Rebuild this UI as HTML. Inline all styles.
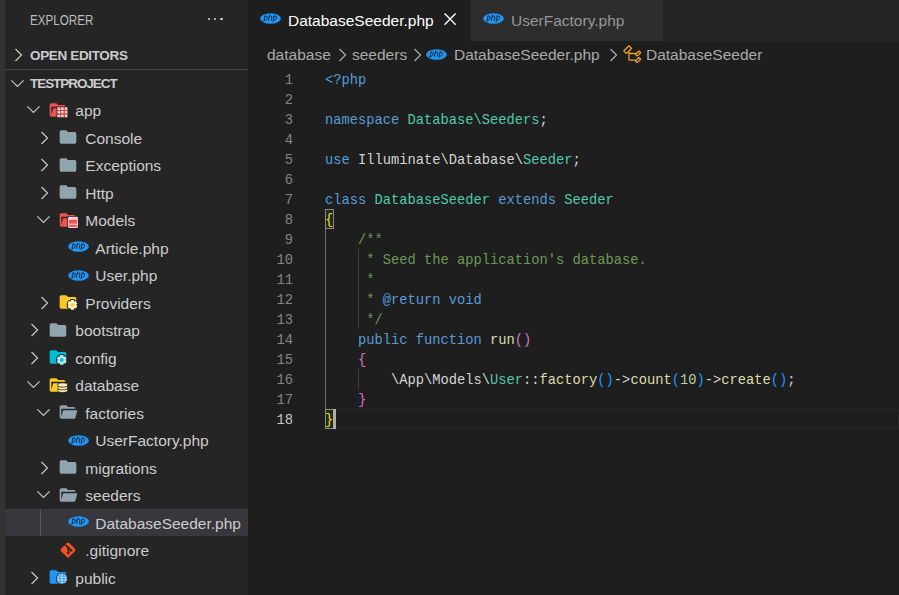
<!DOCTYPE html>
<html><head><meta charset="utf-8"><style>
*{margin:0;padding:0;box-sizing:border-box}
html,body{width:899px;height:595px;overflow:hidden;background:#1e1e1e}
body{position:relative;font-family:"Liberation Sans",sans-serif}
.ic{position:absolute;display:block}
#act{position:absolute;left:0;top:0;width:5px;height:595px;background:#333333}
#side{position:absolute;left:5px;top:0;width:243px;height:595px;background:#252526}
.abs{position:absolute}
.tl{position:absolute;height:27.5px;line-height:27.5px;font-size:15.5px;color:#cccccc;white-space:nowrap;padding-top:0.7px}
.sel{position:absolute;left:5px;width:243px;background:#37373d}
.cl{position:absolute;left:325px;height:20px;line-height:20px;font-family:"Liberation Mono",monospace;font-size:13.75px;color:#d4d4d4;white-space:pre;padding-top:1.8px}
.ln{position:absolute;left:260px;width:33px;text-align:right;height:20px;line-height:20px;font-family:"Liberation Mono",monospace;font-size:13.75px;padding-top:2px}
</style></head><body>
<div id="act"></div>
<div id="side"></div>
<div class="abs" style="left:30px;top:0;height:41px;line-height:41px;font-size:13.75px;color:#bbbbbb;transform:scaleX(0.845);transform-origin:0 0;margin-top:-0.5px">EXPLORER</div>
<div class="abs" style="left:207.6px;top:17.5px;width:2.6px;height:2.6px;border-radius:50%;background:#d8d8d8"></div>
<div class="abs" style="left:213.9px;top:17.5px;width:2.6px;height:2.6px;border-radius:50%;background:#d8d8d8"></div>
<div class="abs" style="left:220.2px;top:17.5px;width:2.6px;height:2.6px;border-radius:50%;background:#d8d8d8"></div>
<svg class="ic" style="left:13.7px;top:48px" width="9" height="14" viewBox="0 0 9 14"><path d="M1.5 1 L7.5 7 L1.5 13" fill="none" stroke="#c5c5c5" stroke-width="1.25"/></svg>
<div class="abs" style="left:30px;top:41.5px;height:27.5px;line-height:27.5px;font-size:13.5px;font-weight:bold;color:#cccccc;letter-spacing:-0.35px">OPEN EDITORS</div>
<div class="abs" style="left:5px;top:69px;width:243px;height:1px;background:#434344"></div>
<svg class="ic" style="left:9.600000000000001px;top:78.89999999999999px" width="15" height="9" viewBox="0 0 15 9"><path d="M1.4 1.4 L7.5 7.5 L13.6 1.4" fill="none" stroke="#c5c5c5" stroke-width="1.2"/></svg>
<div class="abs" style="left:30px;top:70px;height:27.5px;line-height:27.5px;font-size:13.5px;font-weight:bold;color:#cccccc;letter-spacing:-1.05px">TESTPROJECT</div>
<svg class="ic" style="left:25.5px;top:105.05px" width="15" height="9" viewBox="0 0 15 9"><path d="M1.4 1.4 L7.5 7.5 L13.6 1.4" fill="none" stroke="#c5c5c5" stroke-width="1.2"/></svg>
<svg class="ic" style="left:48.333px;top:100.25px" width="20" height="20" viewBox="0 0 24 24"><path d="M19 20H4a2 2 0 0 1-2-2V6c0-1.11.89-2 2-2h6l2 2h7a2 2 0 0 1 2 2H4v10l2.14-8h17.07l-2.28 8.5c-.23.87-1.01 1.5-1.93 1.5z" fill="#ef5350"/><rect x="10.3" y="7.9" width="13.9" height="13.9" fill="#252526"/><rect x="11.3" y="8.7" width="3.4" height="3.4" fill="#ffcdd2"/><rect x="11.3" y="13.0" width="3.4" height="3.4" fill="#ffcdd2"/><rect x="11.3" y="17.299999999999997" width="3.4" height="3.4" fill="#ffcdd2"/><rect x="15.600000000000001" y="8.7" width="3.4" height="3.4" fill="#ffcdd2"/><rect x="15.600000000000001" y="13.0" width="3.4" height="3.4" fill="#ffcdd2"/><rect x="15.600000000000001" y="17.299999999999997" width="3.4" height="3.4" fill="#ffcdd2"/><rect x="19.9" y="8.7" width="3.4" height="3.4" fill="#ffcdd2"/><rect x="19.9" y="13.0" width="3.4" height="3.4" fill="#ffcdd2"/><rect x="19.9" y="17.299999999999997" width="3.4" height="3.4" fill="#ffcdd2"/><rect x="14.7" y="8.7" width="0.9" height="12.3" fill="#ef5350"/><rect x="19" y="8.7" width="0.9" height="12.3" fill="#ef5350"/><rect x="11.3" y="12.1" width="12.3" height="0.9" fill="#ef5350"/><rect x="11.3" y="16.4" width="12.3" height="0.9" fill="#ef5350"/></svg>
<div class="tl" style="left:75.3px;top:96.5px">app</div>
<svg class="ic" style="left:39.5px;top:130.75px" width="9" height="14" viewBox="0 0 9 14"><path d="M1.5 1 L7.5 7 L1.5 13" fill="none" stroke="#c5c5c5" stroke-width="1.25"/></svg>
<svg class="ic" style="left:58.333px;top:126.85px" width="20" height="20" viewBox="0 0 24 24"><path d="M10 4H4c-1.11 0-2 .89-2 2v12a2 2 0 0 0 2 2h16a2 2 0 0 0 2-2V8a2 2 0 0 0-2-2h-8l-2-2z" fill="#90a4ae"/></svg>
<div class="tl" style="left:85.3px;top:124.0px">Console</div>
<svg class="ic" style="left:39.5px;top:158.25px" width="9" height="14" viewBox="0 0 9 14"><path d="M1.5 1 L7.5 7 L1.5 13" fill="none" stroke="#c5c5c5" stroke-width="1.25"/></svg>
<svg class="ic" style="left:58.333px;top:155.25px" width="20" height="20" viewBox="0 0 24 24"><path d="M10 4H4c-1.11 0-2 .89-2 2v12a2 2 0 0 0 2 2h16a2 2 0 0 0 2-2V8a2 2 0 0 0-2-2h-8l-2-2z" fill="#90a4ae"/></svg>
<div class="tl" style="left:85.3px;top:151.5px">Exceptions</div>
<svg class="ic" style="left:39.5px;top:185.75px" width="9" height="14" viewBox="0 0 9 14"><path d="M1.5 1 L7.5 7 L1.5 13" fill="none" stroke="#c5c5c5" stroke-width="1.25"/></svg>
<svg class="ic" style="left:58.333px;top:181.85px" width="20" height="20" viewBox="0 0 24 24"><path d="M10 4H4c-1.11 0-2 .89-2 2v12a2 2 0 0 0 2 2h16a2 2 0 0 0 2-2V8a2 2 0 0 0-2-2h-8l-2-2z" fill="#90a4ae"/></svg>
<div class="tl" style="left:85.3px;top:179.0px">Http</div>
<svg class="ic" style="left:35.5px;top:215.05px" width="15" height="9" viewBox="0 0 15 9"><path d="M1.4 1.4 L7.5 7.5 L13.6 1.4" fill="none" stroke="#c5c5c5" stroke-width="1.2"/></svg>
<svg class="ic" style="left:58.333px;top:210.25px" width="20" height="20" viewBox="0 0 24 24"><path d="M19 20H4a2 2 0 0 1-2-2V6c0-1.11.89-2 2-2h6l2 2h7a2 2 0 0 1 2 2H4v10l2.14-8h17.07l-2.28 8.5c-.23.87-1.01 1.5-1.93 1.5z" fill="#ef5350"/><rect x="11.2" y="7.1" width="13.6" height="15.3" rx="1.6" fill="#252526"/><rect x="12.1" y="8" width="11.8" height="13.5" rx="1.3" fill="#ffcdd2"/><rect x="13.3" y="11.8" width="9.4" height="4.6" fill="#ef5350"/><rect x="13.3" y="17.8" width="9.4" height="2.4" fill="#ef5350"/></svg>
<div class="tl" style="left:85.3px;top:206.5px">Models</div>
<svg class="ic" style="left:67.5px;top:241.35px" width="21" height="11" viewBox="0 0 21 11"><ellipse cx="10.5" cy="5.5" rx="10.3" ry="5.2" fill="#2196f3"/><g fill="none" stroke="#0e2238" stroke-width="0.9" stroke-linecap="round"><path d="M5.0 3.0 L3.8 8.6 M4.8 3.3 C6.6 2.6 7.6 3.2 7.2 4.9 C6.9 6.6 5.6 7.6 4.3 7.2"/><path d="M9.6 1.9 L8.4 7.4 M9.1 4.0 C10.1 2.9 12.1 2.7 11.9 4.2 L11.3 7.4"/><path d="M14.2 3.0 L13.0 8.6 M14.0 3.3 C15.8 2.6 16.9 3.2 16.5 4.9 C16.2 6.6 14.8 7.6 13.5 7.2"/></g></svg>
<div class="tl" style="left:95.3px;top:234.0px">Article.php</div>
<svg class="ic" style="left:67.5px;top:269.75px" width="21" height="11" viewBox="0 0 21 11"><ellipse cx="10.5" cy="5.5" rx="10.3" ry="5.2" fill="#2196f3"/><g fill="none" stroke="#0e2238" stroke-width="0.9" stroke-linecap="round"><path d="M5.0 3.0 L3.8 8.6 M4.8 3.3 C6.6 2.6 7.6 3.2 7.2 4.9 C6.9 6.6 5.6 7.6 4.3 7.2"/><path d="M9.6 1.9 L8.4 7.4 M9.1 4.0 C10.1 2.9 12.1 2.7 11.9 4.2 L11.3 7.4"/><path d="M14.2 3.0 L13.0 8.6 M14.0 3.3 C15.8 2.6 16.9 3.2 16.5 4.9 C16.2 6.6 14.8 7.6 13.5 7.2"/></g></svg>
<div class="tl" style="left:95.3px;top:261.5px">User.php</div>
<svg class="ic" style="left:39.5px;top:295.75px" width="9" height="14" viewBox="0 0 9 14"><path d="M1.5 1 L7.5 7 L1.5 13" fill="none" stroke="#c5c5c5" stroke-width="1.25"/></svg>
<svg class="ic" style="left:58.333px;top:291.85px" width="20" height="20" viewBox="0 0 24 24"><path d="M10 4H4c-1.11 0-2 .89-2 2v12a2 2 0 0 0 2 2h16a2 2 0 0 0 2-2V8a2 2 0 0 0-2-2h-8l-2-2z" fill="#ffca28"/><polygon points="15.07,11.58 15.44,9.58 19.06,9.58 19.43,11.58 19.47,11.60 21.39,10.92 23.20,14.06 21.65,15.38 21.65,15.42 23.20,16.74 21.39,19.88 19.47,19.20 19.43,19.22 19.06,21.22 15.44,21.22 15.07,19.22 15.03,19.20 13.11,19.88 11.30,16.74 12.85,15.42 12.85,15.38 11.30,14.06 13.11,10.92 15.03,11.60" fill="#252526" stroke="#252526" stroke-width="2.2" stroke-linejoin="round"/><polygon points="15.07,11.58 15.44,9.58 19.06,9.58 19.43,11.58 19.47,11.60 21.39,10.92 23.20,14.06 21.65,15.38 21.65,15.42 23.20,16.74 21.39,19.88 19.47,19.20 19.43,19.22 19.06,21.22 15.44,21.22 15.07,19.22 15.03,19.20 13.11,19.88 11.30,16.74 12.85,15.42 12.85,15.38 11.30,14.06 13.11,10.92 15.03,11.60" fill="#fff9c4"/><circle cx="17.25" cy="15.4" r="4.4" fill="#fff9c4"/><circle cx="17.25" cy="15.4" r="2.2" fill="#ffca28"/></svg>
<div class="tl" style="left:85.3px;top:289.0px">Providers</div>
<svg class="ic" style="left:29.5px;top:323.25px" width="9" height="14" viewBox="0 0 9 14"><path d="M1.5 1 L7.5 7 L1.5 13" fill="none" stroke="#c5c5c5" stroke-width="1.25"/></svg>
<svg class="ic" style="left:48.333px;top:320.25px" width="20" height="20" viewBox="0 0 24 24"><path d="M10 4H4c-1.11 0-2 .89-2 2v12a2 2 0 0 0 2 2h16a2 2 0 0 0 2-2V8a2 2 0 0 0-2-2h-8l-2-2z" fill="#90a4ae"/></svg>
<div class="tl" style="left:75.3px;top:316.5px">bootstrap</div>
<svg class="ic" style="left:29.5px;top:350.75px" width="9" height="14" viewBox="0 0 9 14"><path d="M1.5 1 L7.5 7 L1.5 13" fill="none" stroke="#c5c5c5" stroke-width="1.25"/></svg>
<svg class="ic" style="left:48.333px;top:346.85px" width="20" height="20" viewBox="0 0 24 24"><path d="M10 4H4c-1.11 0-2 .89-2 2v12a2 2 0 0 0 2 2h16a2 2 0 0 0 2-2V8a2 2 0 0 0-2-2h-8l-2-2z" fill="#00bcd4"/><polygon points="14.32,11.68 14.69,9.68 18.31,9.68 18.68,11.68 18.72,11.70 20.64,11.02 22.45,14.16 20.90,15.48 20.90,15.52 22.45,16.84 20.64,19.98 18.72,19.30 18.68,19.32 18.31,21.32 14.69,21.32 14.32,19.32 14.28,19.30 12.36,19.98 10.55,16.84 12.10,15.52 12.10,15.48 10.55,14.16 12.36,11.02 14.28,11.70" fill="#252526" stroke="#252526" stroke-width="2.2" stroke-linejoin="round"/><polygon points="14.32,11.68 14.69,9.68 18.31,9.68 18.68,11.68 18.72,11.70 20.64,11.02 22.45,14.16 20.90,15.48 20.90,15.52 22.45,16.84 20.64,19.98 18.72,19.30 18.68,19.32 18.31,21.32 14.69,21.32 14.32,19.32 14.28,19.30 12.36,19.98 10.55,16.84 12.10,15.52 12.10,15.48 10.55,14.16 12.36,11.02 14.28,11.70" fill="#b2ebf2"/><circle cx="16.5" cy="15.5" r="4.4" fill="#b2ebf2"/><circle cx="16.5" cy="15.5" r="2.2" fill="#00bcd4"/></svg>
<div class="tl" style="left:75.3px;top:344.0px">config</div>
<svg class="ic" style="left:25.5px;top:380.05px" width="15" height="9" viewBox="0 0 15 9"><path d="M1.4 1.4 L7.5 7.5 L13.6 1.4" fill="none" stroke="#c5c5c5" stroke-width="1.2"/></svg>
<svg class="ic" style="left:48.333px;top:375.25px" width="20" height="20" viewBox="0 0 24 24"><path d="M19 20H4a2 2 0 0 1-2-2V6c0-1.11.89-2 2-2h6l2 2h7a2 2 0 0 1 2 2H4v10l2.14-8h17.07l-2.28 8.5c-.23.87-1.01 1.5-1.93 1.5z" fill="#ffca28"/><g fill="#ffecb3" stroke="#252526" stroke-width="1"><ellipse cx="17.6" cy="18.4" rx="6" ry="2.6"/><ellipse cx="17.6" cy="15.2" rx="6" ry="2.6"/><ellipse cx="17.6" cy="12" rx="6" ry="2.6"/></g></svg>
<div class="tl" style="left:75.3px;top:371.5px">database</div>
<svg class="ic" style="left:35.5px;top:407.55px" width="15" height="9" viewBox="0 0 15 9"><path d="M1.4 1.4 L7.5 7.5 L13.6 1.4" fill="none" stroke="#c5c5c5" stroke-width="1.2"/></svg>
<svg class="ic" style="left:58.333px;top:401.85px" width="20" height="20" viewBox="0 0 24 24"><path d="M19 20H4a2 2 0 0 1-2-2V6c0-1.11.89-2 2-2h6l2 2h7a2 2 0 0 1 2 2H4v10l2.14-8h17.07l-2.28 8.5c-.23.87-1.01 1.5-1.93 1.5z" fill="#90a4ae"/></svg>
<div class="tl" style="left:85.3px;top:399.0px">factories</div>
<svg class="ic" style="left:67.5px;top:434.75px" width="21" height="11" viewBox="0 0 21 11"><ellipse cx="10.5" cy="5.5" rx="10.3" ry="5.2" fill="#2196f3"/><g fill="none" stroke="#0e2238" stroke-width="0.9" stroke-linecap="round"><path d="M5.0 3.0 L3.8 8.6 M4.8 3.3 C6.6 2.6 7.6 3.2 7.2 4.9 C6.9 6.6 5.6 7.6 4.3 7.2"/><path d="M9.6 1.9 L8.4 7.4 M9.1 4.0 C10.1 2.9 12.1 2.7 11.9 4.2 L11.3 7.4"/><path d="M14.2 3.0 L13.0 8.6 M14.0 3.3 C15.8 2.6 16.9 3.2 16.5 4.9 C16.2 6.6 14.8 7.6 13.5 7.2"/></g></svg>
<div class="tl" style="left:95.3px;top:426.5px">UserFactory.php</div>
<svg class="ic" style="left:39.5px;top:460.75px" width="9" height="14" viewBox="0 0 9 14"><path d="M1.5 1 L7.5 7 L1.5 13" fill="none" stroke="#c5c5c5" stroke-width="1.25"/></svg>
<svg class="ic" style="left:58.333px;top:456.85px" width="20" height="20" viewBox="0 0 24 24"><path d="M10 4H4c-1.11 0-2 .89-2 2v12a2 2 0 0 0 2 2h16a2 2 0 0 0 2-2V8a2 2 0 0 0-2-2h-8l-2-2z" fill="#90a4ae"/></svg>
<div class="tl" style="left:85.3px;top:454.0px">migrations</div>
<svg class="ic" style="left:35.5px;top:490.05px" width="15" height="9" viewBox="0 0 15 9"><path d="M1.4 1.4 L7.5 7.5 L13.6 1.4" fill="none" stroke="#c5c5c5" stroke-width="1.2"/></svg>
<svg class="ic" style="left:58.333px;top:485.25px" width="20" height="20" viewBox="0 0 24 24"><path d="M19 20H4a2 2 0 0 1-2-2V6c0-1.11.89-2 2-2h6l2 2h7a2 2 0 0 1 2 2H4v10l2.14-8h17.07l-2.28 8.5c-.23.87-1.01 1.5-1.93 1.5z" fill="#90a4ae"/></svg>
<div class="tl" style="left:85.3px;top:481.5px">seeders</div>
<div class="sel" style="top:509px;height:27px"></div>
<div style="position:absolute;left:40px;top:509px;width:1px;height:27px;background:#585858"></div>
<svg class="ic" style="left:67.5px;top:516.35px" width="21" height="11" viewBox="0 0 21 11"><ellipse cx="10.5" cy="5.5" rx="10.3" ry="5.2" fill="#2196f3"/><g fill="none" stroke="#0e2238" stroke-width="0.9" stroke-linecap="round"><path d="M5.0 3.0 L3.8 8.6 M4.8 3.3 C6.6 2.6 7.6 3.2 7.2 4.9 C6.9 6.6 5.6 7.6 4.3 7.2"/><path d="M9.6 1.9 L8.4 7.4 M9.1 4.0 C10.1 2.9 12.1 2.7 11.9 4.2 L11.3 7.4"/><path d="M14.2 3.0 L13.0 8.6 M14.0 3.3 C15.8 2.6 16.9 3.2 16.5 4.9 C16.2 6.6 14.8 7.6 13.5 7.2"/></g></svg>
<div class="tl" style="left:95.3px;top:509.0px">DatabaseSeeder.php</div>
<svg class="ic" style="left:59px;top:541.25px" width="18" height="18" viewBox="0 0 18 18"><rect x="3.3" y="3.3" width="11.4" height="11.4" rx="1.6" transform="rotate(45 9 9)" fill="#f4511e"/><g stroke="#252526" stroke-width="1.5" fill="none"><path d="M6.2 3.6 L9.3 6.7 L9.3 12"/><path d="M9.3 6.7 L12 9.4"/></g><circle cx="9.3" cy="6.7" r="1.3" fill="#252526"/><circle cx="9.3" cy="12" r="1.3" fill="#252526"/><circle cx="12" cy="9.4" r="1.3" fill="#252526"/></svg>
<div class="tl" style="left:85.3px;top:536.5px">.gitignore</div>
<svg class="ic" style="left:29.5px;top:570.75px" width="9" height="14" viewBox="0 0 9 14"><path d="M1.5 1 L7.5 7 L1.5 13" fill="none" stroke="#c5c5c5" stroke-width="1.25"/></svg>
<svg class="ic" style="left:48.333px;top:566.85px" width="20" height="20" viewBox="0 0 24 24"><path d="M10 4H4c-1.11 0-2 .89-2 2v12a2 2 0 0 0 2 2h16a2 2 0 0 0 2-2V8a2 2 0 0 0-2-2h-8l-2-2z" fill="#2196f3"/><circle cx="16.65" cy="14" r="7.2" fill="#252526"/><circle cx="16.65" cy="14" r="6.1" fill="#bbdefb"/><g stroke="#2196f3" stroke-width="1" fill="none"><ellipse cx="16.65" cy="14" rx="2.5" ry="6.1"/><line x1="10.5" y1="14" x2="22.8" y2="14"/><line x1="11.3" y1="10.9" x2="22" y2="10.9"/><line x1="11.3" y1="17.1" x2="22" y2="17.1"/></g></svg>
<div class="tl" style="left:75.3px;top:564.0px">public</div>
<!-- tabs -->
<div class="abs" style="left:248px;top:0;width:651px;height:41px;background:#252526"></div>
<div class="abs" style="left:248px;top:0;width:222px;height:41px;background:#1e1e1e"></div>
<div class="abs" style="left:471px;top:0;width:192px;height:41px;background:#2d2d2d"></div>
<svg class="ic" style="left:259.7px;top:13.350000000000001px" width="21" height="11" viewBox="0 0 21 11"><ellipse cx="10.5" cy="5.5" rx="10.3" ry="5.2" fill="#2196f3"/><g fill="none" stroke="#0e2238" stroke-width="0.9" stroke-linecap="round"><path d="M5.0 3.0 L3.8 8.6 M4.8 3.3 C6.6 2.6 7.6 3.2 7.2 4.9 C6.9 6.6 5.6 7.6 4.3 7.2"/><path d="M9.6 1.9 L8.4 7.4 M9.1 4.0 C10.1 2.9 12.1 2.7 11.9 4.2 L11.3 7.4"/><path d="M14.2 3.0 L13.0 8.6 M14.0 3.3 C15.8 2.6 16.9 3.2 16.5 4.9 C16.2 6.6 14.8 7.6 13.5 7.2"/></g></svg>
<div class="abs" style="left:288px;top:0;height:41px;line-height:41px;font-size:15.5px;color:#ffffff">DatabaseSeeder.php</div>
<svg class="ic" style="left:439.1px;top:8px" width="22.2" height="22.2" viewBox="0 0 16 16"><path d="M8 8.707l3.646 3.647.708-.707L8.707 8l3.647-3.646-.707-.708L8 7.293 4.354 3.646l-.707.708L7.293 8l-3.646 3.646.707.708L8 8.707z" fill="#ffffff"/></svg>
<svg class="ic" style="left:483.4px;top:13.350000000000001px" width="21" height="11" viewBox="0 0 21 11"><ellipse cx="10.5" cy="5.5" rx="10.3" ry="5.2" fill="#2196f3"/><g fill="none" stroke="#0e2238" stroke-width="0.9" stroke-linecap="round"><path d="M5.0 3.0 L3.8 8.6 M4.8 3.3 C6.6 2.6 7.6 3.2 7.2 4.9 C6.9 6.6 5.6 7.6 4.3 7.2"/><path d="M9.6 1.9 L8.4 7.4 M9.1 4.0 C10.1 2.9 12.1 2.7 11.9 4.2 L11.3 7.4"/><path d="M14.2 3.0 L13.0 8.6 M14.0 3.3 C15.8 2.6 16.9 3.2 16.5 4.9 C16.2 6.6 14.8 7.6 13.5 7.2"/></g></svg>
<div class="abs" style="left:511px;top:0;height:41px;line-height:41px;font-size:15.5px;color:#969696">UserFactory.php</div>
<!-- breadcrumbs -->
<div class="abs" style="left:267px;top:41px;height:28px;line-height:28px;font-size:15.5px;color:#a9a9a9;white-space:nowrap">database</div>
<svg class="ic" style="left:338.2px;top:48px" width="9" height="14" viewBox="0 0 9 14"><path d="M1.5 1 L7.5 7 L1.5 13" fill="none" stroke="#a9a9a9" stroke-width="1.25"/></svg>
<div class="abs" style="left:352px;top:41px;height:28px;line-height:28px;font-size:15.5px;color:#a9a9a9;white-space:nowrap">seeders</div>
<svg class="ic" style="left:412.5px;top:48px" width="9" height="14" viewBox="0 0 9 14"><path d="M1.5 1 L7.5 7 L1.5 13" fill="none" stroke="#a9a9a9" stroke-width="1.25"/></svg>
<svg class="ic" style="left:426.1px;top:49.1px" width="21" height="11" viewBox="0 0 21 11"><ellipse cx="10.5" cy="5.5" rx="10.3" ry="5.2" fill="#2196f3"/><g fill="none" stroke="#0e2238" stroke-width="0.9" stroke-linecap="round"><path d="M5.0 3.0 L3.8 8.6 M4.8 3.3 C6.6 2.6 7.6 3.2 7.2 4.9 C6.9 6.6 5.6 7.6 4.3 7.2"/><path d="M9.6 1.9 L8.4 7.4 M9.1 4.0 C10.1 2.9 12.1 2.7 11.9 4.2 L11.3 7.4"/><path d="M14.2 3.0 L13.0 8.6 M14.0 3.3 C15.8 2.6 16.9 3.2 16.5 4.9 C16.2 6.6 14.8 7.6 13.5 7.2"/></g></svg>
<div class="abs" style="left:454px;top:41px;height:28px;line-height:28px;font-size:15.5px;color:#a9a9a9;white-space:nowrap">DatabaseSeeder.php</div>
<svg class="ic" style="left:609.2px;top:48px" width="9" height="14" viewBox="0 0 9 14"><path d="M1.5 1 L7.5 7 L1.5 13" fill="none" stroke="#a9a9a9" stroke-width="1.25"/></svg>
<svg class="ic" style="left:621.9px;top:43.8px" width="20.8" height="20.8" viewBox="0 0 16 16"><path d="M11.34 9.71h.71l2.67-2.67v-.71L13.38 5h-.7l-1.82 1.810h-5V5.56l1.86-1.85V3l-2-2H5L1 5v.71l2 2h.71l1.14-1.150v5.790l.5.5H10v.52l1.33 1.34h.71l2.67-2.67v-.71L13.37 10h-.7l-1.86 1.85h-5v-4H10v.48l1.34 1.38zm1.69-3.65l.63.63-2 2-.63-.63 2-2zm0 5l.63.63-2 2-.63-.63 2-2zM3.35 6.65l-1.29-1.3 3.29-3.29 1.3 1.290-3.3 3.3z" fill="#ee9d28"/></svg>
<div class="abs" style="left:646px;top:41px;height:28px;line-height:28px;font-size:15.5px;color:#a9a9a9;white-space:nowrap">DatabaseSeeder</div>
<!-- editor -->
<div class="abs" style="left:325px;top:409px;width:574px;height:20px;border:1px solid #282828;border-left:none"></div>
<div class="abs" style="left:325px;top:229px;width:1px;height:180px;background:#707070"></div>
<div class="abs" style="left:358px;top:249px;width:1px;height:80px;background:#404040"></div>
<div class="abs" style="left:358px;top:369px;width:1px;height:20px;background:#404040"></div>
<div class="abs" style="left:325px;top:209px;width:9px;height:20px;border:1px solid #888888;background:#1e2b1e"></div>
<div class="abs" style="left:325px;top:409px;width:9px;height:20px;border:1px solid #888888;background:#1e2b1e"></div>
<div class="ln" style="top:69px;color:#858585">1</div>
<div class="ln" style="top:89px;color:#858585">2</div>
<div class="ln" style="top:109px;color:#858585">3</div>
<div class="ln" style="top:129px;color:#858585">4</div>
<div class="ln" style="top:149px;color:#858585">5</div>
<div class="ln" style="top:169px;color:#858585">6</div>
<div class="ln" style="top:189px;color:#858585">7</div>
<div class="ln" style="top:209px;color:#858585">8</div>
<div class="ln" style="top:229px;color:#858585">9</div>
<div class="ln" style="top:249px;color:#858585">10</div>
<div class="ln" style="top:269px;color:#858585">11</div>
<div class="ln" style="top:289px;color:#858585">12</div>
<div class="ln" style="top:309px;color:#858585">13</div>
<div class="ln" style="top:329px;color:#858585">14</div>
<div class="ln" style="top:349px;color:#858585">15</div>
<div class="ln" style="top:369px;color:#858585">16</div>
<div class="ln" style="top:389px;color:#858585">17</div>
<div class="ln" style="top:409px;color:#c6c6c6">18</div>
<div class="cl" style="top:69px"><span style="color:#569cd6">&lt;?php</span></div>
<div class="cl" style="top:89px"></div>
<div class="cl" style="top:109px"><span style="color:#569cd6">namespace</span> <span style="color:#4ec9b0">Database\Seeders</span><span style="color:#d4d4d4">;</span></div>
<div class="cl" style="top:129px"></div>
<div class="cl" style="top:149px"><span style="color:#569cd6">use</span> <span style="color:#d4d4d4">Illuminate\Database\</span><span style="color:#4ec9b0">Seeder</span><span style="color:#d4d4d4">;</span></div>
<div class="cl" style="top:169px"></div>
<div class="cl" style="top:189px"><span style="color:#569cd6">class</span> <span style="color:#4ec9b0">DatabaseSeeder</span> <span style="color:#569cd6">extends</span> <span style="color:#4ec9b0">Seeder</span></div>
<div class="cl" style="top:209px"><span style="color:#ffd700">{</span></div>
<div class="cl" style="top:229px">    <span style="color:#6a9955">/**</span></div>
<div class="cl" style="top:249px">     <span style="color:#6a9955">* Seed the application's database.</span></div>
<div class="cl" style="top:269px">     <span style="color:#6a9955">*</span></div>
<div class="cl" style="top:289px">     <span style="color:#6a9955">* </span><span style="color:#569cd6">@return</span> <span style="color:#569cd6">void</span></div>
<div class="cl" style="top:309px">     <span style="color:#6a9955">*/</span></div>
<div class="cl" style="top:329px">    <span style="color:#569cd6">public</span> <span style="color:#569cd6">function</span> <span style="color:#dcdcaa">run</span><span style="color:#da70d6">()</span></div>
<div class="cl" style="top:349px">    <span style="color:#da70d6">{</span></div>
<div class="cl" style="top:369px">        <span style="color:#d4d4d4">\App\Models\</span><span style="color:#4ec9b0">User</span><span style="color:#d4d4d4">::</span><span style="color:#dcdcaa">factory</span><span style="color:#179fff">()</span><span style="color:#d4d4d4">-&gt;</span><span style="color:#dcdcaa">count</span><span style="color:#179fff">(</span><span style="color:#b5cea8">10</span><span style="color:#179fff">)</span><span style="color:#d4d4d4">-&gt;</span><span style="color:#dcdcaa">create</span><span style="color:#179fff">()</span><span style="color:#d4d4d4">;</span></div>
<div class="cl" style="top:389px">    <span style="color:#da70d6">}</span></div>
<div class="cl" style="top:409px"><span style="color:#ffd700">}</span></div>
<div class="abs" style="left:333px;top:409px;width:3px;height:20px;background:#aeafad"></div>
</body></html>
